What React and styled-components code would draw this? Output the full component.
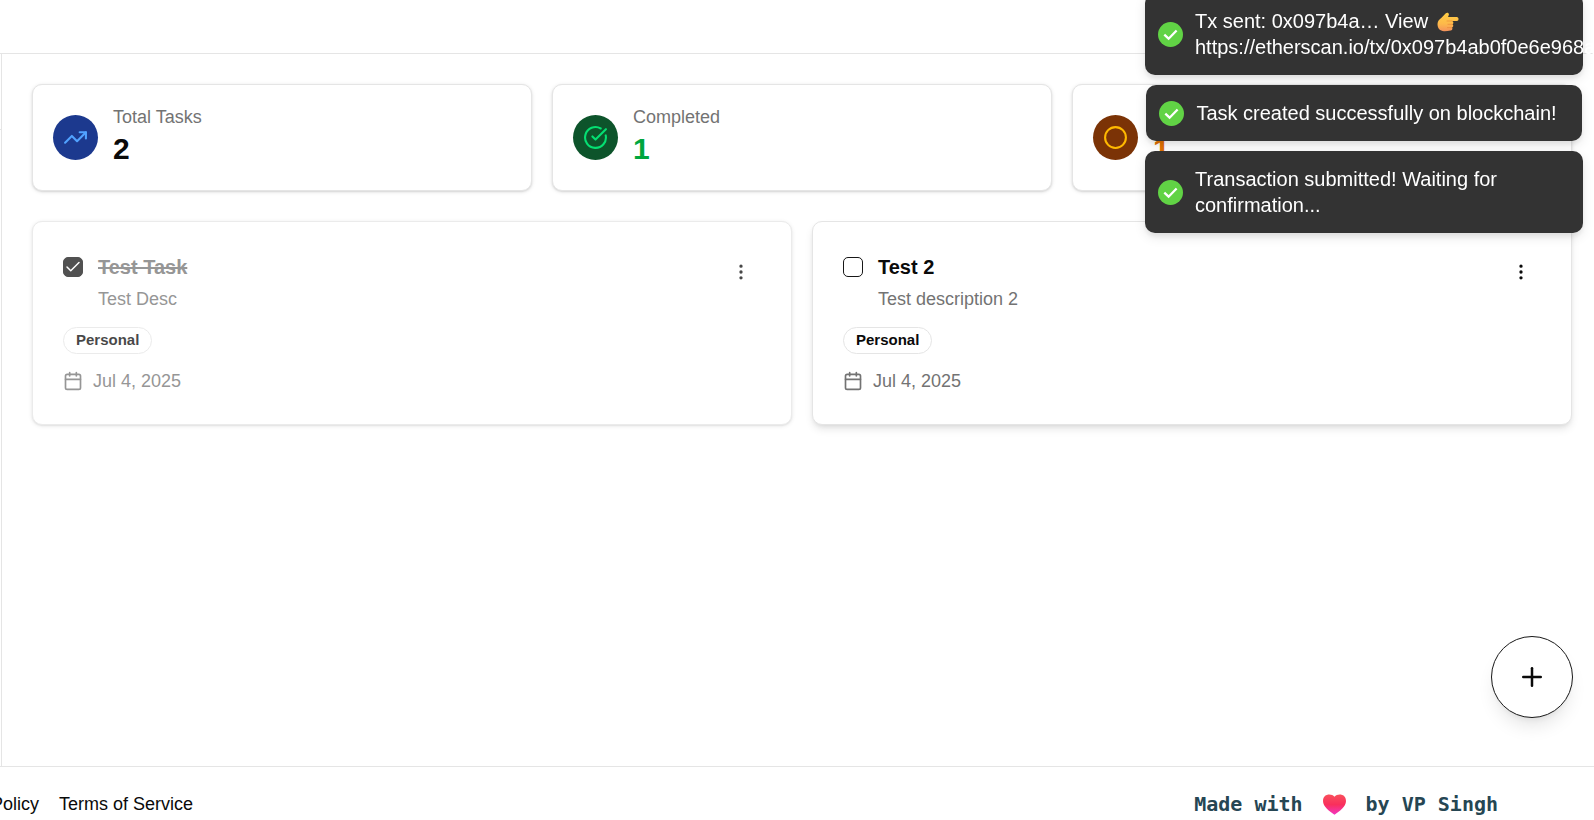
import React from "react";
import styled, { createGlobalStyle } from "styled-components";
import { TrendingUp, CircleCheckBig, Circle, EllipsisVertical, Calendar, Plus } from "lucide-react";

const GlobalStyle = createGlobalStyle`
  *, *::before, *::after { box-sizing: border-box; }
  body {
    margin: 0;
    background: #ffffff;
    color: #0a0a0a;
    font-family: "Liberation Sans", Arial, sans-serif;
    font-size: 18px;
    line-height: 25px;
  }
  p { margin: 0; }
`;

const Page = styled.div`
  display: flex;
  flex-direction: column;
  min-height: 100vh;
`;

const Header = styled.header`
  height: 54px;
  flex: none;
  border-bottom: 1px solid #e5e5e5;
`;

const Body = styled.div`
  display: flex;
  flex: 1;
`;

const Sidebar = styled.aside`
  width: 2px;
  border-right: 1px solid #e5e5e5;
  padding-top: 75px;
`;

const Divider = styled.hr`
  margin: 0;
  border: 0;
  height: 1px;
  background: #e5e5e5;
`;

const Main = styled.main`
  flex: 1;
  display: flex;
  flex-direction: column;
  gap: 30px;
  padding: 30px 22px 30px 30px;
`;

const Grid = styled.section`
  display: grid;
  grid-template-columns: repeat(${(p) => p.$columns}, 1fr);
  gap: 20px;
`;

const Card = styled.article`
  border: 1px solid #e5e5e5;
  border-radius: 10px;
  background: #ffffff;
`;

const StatBox = styled(Card)`
  display: flex;
  align-items: center;
  gap: 15px;
  padding: 20px;
  box-shadow: 0 1px 4px rgba(0, 0, 0, 0.1), 0 1px 2px rgba(0, 0, 0, 0.1);
`;

const StatIcon = styled.div`
  display: grid;
  place-items: center;
  width: 45px;
  height: 45px;
  border-radius: 50%;
  background: ${(p) => p.$bg};
  color: ${(p) => p.$fg};
`;

const Muted = styled.p`
  color: #737373;
`;

const StatValue = styled.p`
  padding-bottom: 2px;
  font-size: 30px;
  font-weight: 700;
  line-height: 38px;
  color: ${(p) => p.$color};
`;

const TaskBox = styled(Card)`
  display: flex;
  flex-direction: column;
  align-items: stretch;
  gap: 15px;
  padding: 30px;
  opacity: ${(p) => (p.$done ? 0.75 : 1)};
  box-shadow: ${(p) =>
    p.$done
      ? "0 1px 4px rgba(0, 0, 0, 0.1), 0 1px 2px rgba(0, 0, 0, 0.1)"
      : "0 5px 8px -1px rgba(0, 0, 0, 0.1), 0 2px 5px -2px rgba(0, 0, 0, 0.1)"};
`;

const TaskTop = styled.div`
  display: flex;
  align-items: flex-start;
  gap: 15px;
`;

const Checkbox = styled.input`
  appearance: none;
  flex: none;
  width: 20px;
  height: 20px;
  margin: 5px 0;
  border: 1px solid #171717;
  border-radius: 5px;
  background: #ffffff;

  &:checked {
    background: #171717
      url("data:image/svg+xml,%3Csvg xmlns='http://www.w3.org/2000/svg' viewBox='0 0 24 24' fill='none' stroke='white' stroke-width='2' stroke-linecap='round' stroke-linejoin='round'%3E%3Cpath d='M20 6 9 17l-5-5'/%3E%3C/svg%3E")
      center / 18px no-repeat;
  }
`;

const TaskText = styled.div`
  flex: 1;
  display: flex;
  flex-direction: column;
  gap: 5px;
`;

const TaskTitle = styled.label`
  align-self: flex-start;
  font-size: 20px;
  font-weight: 700;
  line-height: 30px;
  color: ${(p) => (p.$done ? "#737373" : "#0a0a0a")};
  text-decoration: ${(p) => (p.$done ? "line-through" : "none")};
`;

const MenuButton = styled.button`
  display: grid;
  place-items: center;
  width: 40px;
  height: 40px;
  padding: 0;
  border: 0;
  background: none;
  color: #0a0a0a;
`;

const Badge = styled.span`
  align-self: flex-start;
  padding: 0 12px 2px;
  border: 1px solid #e5e5e5;
  border-radius: 14px;
  font-size: 15px;
  font-weight: 700;
  line-height: 23px;
`;

const DateRow = styled.div`
  display: flex;
  align-items: center;
  gap: 10px;
  color: #737373;

  svg { margin-bottom: 1px; }
`;

const AddButton = styled.button`
  position: fixed;
  right: 21px;
  bottom: 102px;
  display: grid;
  place-items: center;
  width: 82px;
  height: 82px;
  padding: 0;
  border: 1px solid #171717;
  border-radius: 50%;
  background: #ffffff;
  color: #0a0a0a;
  box-shadow: 0 12px 18px -4px rgba(0, 0, 0, 0.1), 0 5px 8px -5px rgba(0, 0, 0, 0.1);
`;

const Footer = styled.footer`
  flex: none;
  display: flex;
  align-items: center;
  justify-content: space-between;
  height: 54px;
  padding: 22px 96px 0 0;
  border-top: 1px solid #e5e5e5;
  white-space: nowrap;
`;

const FooterNav = styled.nav`
  display: flex;
  gap: 20px;
  margin-left: -73px;
`;

const FooterLink = styled.a`
  color: #0a0a0a;
  text-decoration: none;
`;

const Credit = styled.p`
  display: flex;
  align-items: center;
  gap: 20px;
  color: #264653;
  font-family: "DejaVu Sans Mono", monospace;
  font-size: 20px;
  font-weight: 700;
`;

const Toasts = styled.div`
  position: fixed;
  top: -7px;
  right: 11px;
  display: flex;
  flex-direction: column;
  align-items: center;
  gap: 10px;
  width: 438px;
`;

const ToastBox = styled.div`
  display: flex;
  align-items: center;
  gap: 12px;
  max-width: 438px;
  padding: 15px 25px 15px 13px;
  border-radius: 10px;
  background: #333333;
  color: #ffffff;
  font-size: 20px;
  line-height: 26px;
  box-shadow: 0 4px 12px rgba(0, 0, 0, 0.1), 0 4px 4px rgba(0, 0, 0, 0.05);

  > svg { flex: none; }
`;

const ToastText = styled.p`
  width: ${(p) => (p.$wide ? "363px" : "auto")};

  svg {
    margin-left: 3px;
    vertical-align: -4px;
  }
`;

const SuccessIcon = () => (
  <svg width="25" height="25" viewBox="0 0 25 25" fill="none" aria-hidden="true">
    <circle cx="12.5" cy="12.5" r="12.5" fill="#61d345" />
    <path d="M6.3 12.600l4.300 4.100 8-8.200" stroke="#fff" strokeWidth="2.300" />
  </svg>
);

const PointingHand = () => (
  <svg width="22" height="20" viewBox="0 0 22 20" role="img" aria-label="Pointing right">
    <defs>
      <linearGradient id="hand" x1="0" y1="0" x2="0" y2="1">
        <stop offset="0" stopColor="#ffcf45" />
        <stop offset="0.6" stopColor="#fdb94a" />
        <stop offset="1" stopColor="#f4925c" />
      </linearGradient>
    </defs>
    <path
      d="M.5 12C.5 9 2.500 7.500 4.500 5.800L8.800 1.300C10.200 0 12.500 1 11.800 3L11 5h8.800c2.300 0 2.300 4 0 4H15c1.700.4 1.800 2.800.4 3.300 1.300.7 1.100 2.900-.4 3.300.9 1 .2 2.700-1.300 2.800-2.500.6-4.700.9-6.700.8C3 19 .5 16.500.5 12z"
      fill="url(#hand)"
    />
    <path d="M10 9h5M11 12.300h4M10.500 15.600h4" stroke="#e98a3a" strokeWidth=".7" strokeLinecap="round" />
  </svg>
);

const Heart = () => (
  <svg width="23" height="21" viewBox="0 0 23 21" role="img" aria-label="love">
    <defs>
      <linearGradient id="heart" x1="0" y1="0" x2="0" y2="1">
        <stop offset="0" stopColor="#f9505c" />
        <stop offset="0.5" stopColor="#f92f5c" />
        <stop offset="1" stopColor="#f235c4" />
      </linearGradient>
    </defs>
    <path d="M11.500 2.800C8.500-1 0-.5 0 7c0 5.500 6 10 11.500 13.800C17 17 23 12.500 23 7c0-7.500-8.500-8-11.500-4.200z" fill="url(#heart)" />
  </svg>
);

const stats = [
  { label: "Total Tasks", value: 2, color: "#0a0a0a", bg: "#1c398e", fg: "#51a2ff", Icon: TrendingUp },
  { label: "Completed", value: 1, color: "#00a63e", bg: "#0d542b", fg: "#05df72", Icon: CircleCheckBig },
  { label: "Pending", value: 1, color: "#e17100", bg: "#7b3306", fg: "#ffb900", Icon: Circle },
];

const tasks = [
  { id: "task-1", title: "Test Task", text: "Test Desc", tag: "Personal", date: "Jul 4, 2025", done: true },
  { id: "task-2", title: "Test 2", text: "Test description 2", tag: "Personal", date: "Jul 4, 2025", done: false },
];

const Stat = ({ label, value, color, bg, fg, Icon }) => (
  <StatBox>
    <StatIcon $bg={bg} $fg={fg}>
      <Icon size={25} />
    </StatIcon>
    <div>
      <Muted>{label}</Muted>
      <StatValue $color={color}>{value}</StatValue>
    </div>
  </StatBox>
);

const Task = ({ id, title, text, tag, date, done }) => (
  <TaskBox $done={done}>
    <TaskTop>
      <Checkbox type="checkbox" id={id} defaultChecked={done} />
      <TaskText>
        <TaskTitle htmlFor={id} $done={done}>{title}</TaskTitle>
        <Muted>{text}</Muted>
      </TaskText>
      <MenuButton type="button" aria-label="Task options">
        <EllipsisVertical size={20} />
      </MenuButton>
    </TaskTop>
    <Badge>{tag}</Badge>
    <DateRow>
      <Calendar size={20} />
      <time dateTime="2025-07-04">{date}</time>
    </DateRow>
  </TaskBox>
);

const Toast = ({ children, wide }) => (
  <ToastBox role="status">
    <SuccessIcon />
    <ToastText $wide={wide}>{children}</ToastText>
  </ToastBox>
);

export default function App() {
  return (
    <>
      <GlobalStyle />
      <Page>
        <Header />
        <Body>
          <Sidebar><Divider /></Sidebar>
          <Main>
            <Grid $columns={3}>
              {stats.map((s) => <Stat key={s.label} {...s} />)}
            </Grid>
            <Grid $columns={2}>
              {tasks.map((t) => <Task key={t.id} {...t} />)}
            </Grid>
          </Main>
        </Body>
        <Footer>
          <FooterNav>
            <FooterLink href="#privacy">Privacy Policy</FooterLink>
            <FooterLink href="#terms">Terms of Service</FooterLink>
          </FooterNav>
          <Credit>
            <span>Made with</span>
            <Heart />
            <span>by VP Singh</span>
          </Credit>
        </Footer>
      </Page>
      <AddButton type="button" aria-label="Add task">
        <Plus size={30} />
      </AddButton>
      <Toasts>
        <Toast wide>
          Tx sent: 0x097b4a… View <PointingHand /> https://etherscan.io/tx/0x097b4ab0f0e6e968a
        </Toast>
        <Toast>Task created successfully on blockchain!</Toast>
        <Toast wide>Transaction submitted! Waiting for confirmation...</Toast>
      </Toasts>
    </>
  );
}
